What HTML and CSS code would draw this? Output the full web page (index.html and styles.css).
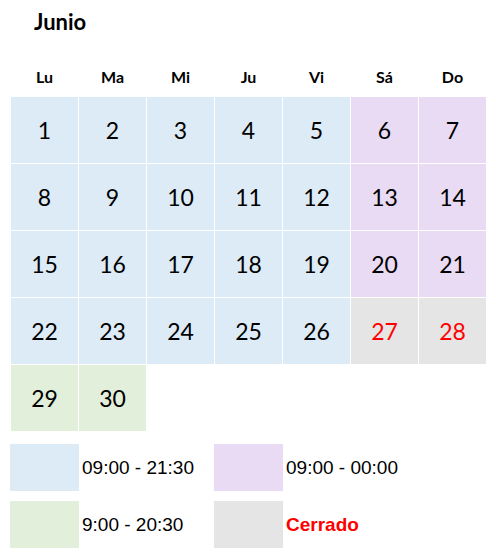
FILE: index.html
```html
<!DOCTYPE html>
<html lang="es">
<head>
<meta charset="utf-8">
<title>Junio</title>
<link rel="stylesheet" href="styles.css">
</head>
<body>
<div class="page">
  <h1 class="title">Junio</h1>
  <div class="weekdays">
    <div>Lu</div><div>Ma</div><div>Mi</div><div>Ju</div><div>Vi</div><div>Sá</div><div>Do</div>
  </div>
  <div class="grid">
    <div class="day wk">1</div><div class="day wk">2</div><div class="day wk">3</div><div class="day wk">4</div><div class="day wk">5</div><div class="day we">6</div><div class="day we">7</div>
    <div class="day wk">8</div><div class="day wk">9</div><div class="day wk">10</div><div class="day wk">11</div><div class="day wk">12</div><div class="day we">13</div><div class="day we">14</div>
    <div class="day wk">15</div><div class="day wk">16</div><div class="day wk">17</div><div class="day wk">18</div><div class="day wk">19</div><div class="day we">20</div><div class="day we">21</div>
    <div class="day wk">22</div><div class="day wk">23</div><div class="day wk">24</div><div class="day wk">25</div><div class="day wk">26</div><div class="day closed">27</div><div class="day closed">28</div>
    <div class="day late">29</div><div class="day late">30</div>
  </div>
  <div class="legend">
    <div class="swatch wk"></div><div class="label">09:00 - 21:30</div>
    <div class="swatch we"></div><div class="label">09:00 - 00:00</div>
    <div class="swatch late"></div><div class="label">9:00 - 20:30</div>
    <div class="swatch closed"></div><div class="label label-closed">Cerrado</div>
  </div>
</div>
</body>
</html>
```
FILE: styles.css
```css
html, body {
  margin: 0;
  padding: 0;
  background: #ffffff;
}

.page {
  width: 496px;
  font-family: Lato, "Open Sans", sans-serif;
  color: #000000;
}

.title {
  margin: 0;
  height: 44px;
  padding-left: 34px;
  font-size: 22px;
  font-weight: 700;
  line-height: 44px;
}

.weekdays {
  display: grid;
  grid-template-columns: repeat(7, 67px);
  column-gap: 1px;
  padding-left: 11px;
  height: 53px;
  align-items: end;
  box-sizing: border-box;
  padding-bottom: 10px;
}

.weekdays div {
  text-align: center;
  font-size: 16px;
  font-weight: 700;
  line-height: 20px;
}

.grid {
  display: grid;
  grid-template-columns: repeat(7, 67px);
  grid-auto-rows: 66px;
  gap: 1px;
  padding-left: 11px;
}

.day {
  display: flex;
  align-items: center;
  justify-content: center;
  font-size: 23px;
}

.wk { background: #ddebf7; }
.we { background: #e9dbf4; }
.late { background: #e2efda; }
.closed { background: #e5e5e5; }

.day.closed { color: #ff0000; }

.legend {
  display: grid;
  grid-template-columns: 69px 135px 69px 1fr;
  grid-auto-rows: 47px;
  row-gap: 10px;
  margin-top: 13px;
  padding-left: 10px;
  font-family: "Liberation Sans", Arial, sans-serif;
  font-size: 19px;
}

.label {
  display: flex;
  align-items: center;
  padding-left: 3px;
}

.label-closed {
  color: #ff0000;
  font-weight: 700;
}
```
